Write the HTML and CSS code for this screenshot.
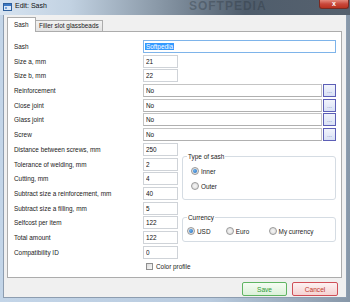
FILE: index.html
```html
<!DOCTYPE html>
<html lang="en">
<head>
  <meta charset="UTF-8">
  <title>Edit: Sash</title>
  <link rel="stylesheet" href="styles.css">
</head>
<body>
  <div class="window">
    <div class="titlebar">
      <svg class="app-icon" width="9" height="8" viewBox="0 0 9 8">
        <rect x="0.5" y="0.5" width="8" height="7" fill="#dbe8f6" stroke="#2d5f9c"/>
        <rect x="1" y="1" width="7" height="2" fill="#3b78c4"/>
        <rect x="2" y="4" width="2" height="2" fill="#7aa6da"/>
      </svg>
      <span class="title">Edit: Sash</span>
      <span class="watermark">SOFTPEDIA</span>
      <div class="close-btn">x</div>
    </div>

    <div class="client">
      <div class="tabs">
        <div class="tab active">Sash</div>
        <div class="tab">Filler slot glassbeads</div>
      </div>

      <div class="panel">
        <div class="form">
          <label>Sash</label>
          <div class="edit wide focused"><span class="sel">Softpedia</span></div>

          <label>Size a, mm</label>
          <input class="short" value="21">

          <label>Size b, mm</label>
          <input class="short" value="22">

          <label>Reinforcement</label>
          <input class="long" value="No">
          <button class="dots">...</button>

          <label>Close joint</label>
          <input class="long" value="No">
          <button class="dots">...</button>

          <label>Glass joint</label>
          <input class="long" value="No">
          <button class="dots">...</button>

          <label>Screw</label>
          <input class="long" value="No">
          <button class="dots">...</button>

          <label>Distance between screws, mm</label>
          <input class="short" value="250">

          <fieldset class="group sash-type">
            <legend>Type of sash</legend>
            <div class="option"><span class="radio checked"></span>Inner</div>
            <div class="option"><span class="radio"></span>Outer</div>
          </fieldset>

          <label>Tolerance of welding, mm</label>
          <input class="short" value="2">

          <label>Cutting, mm</label>
          <input class="short" value="4">

          <label>Subtract size a reinforcement, mm</label>
          <input class="short" value="40">

          <label>Subtract size a filling, mm</label>
          <input class="short" value="5">

          <fieldset class="group currency">
            <legend>Currency</legend>
            <div class="option usd"><span class="radio checked"></span>USD</div>
            <div class="option euro"><span class="radio"></span>Euro</div>
            <div class="option"><span class="radio"></span>My currency</div>
          </fieldset>

          <label>Selfcost per item</label>
          <input class="short" value="122">

          <label>Total amount</label>
          <input class="short" value="122">

          <label>Compatibility ID</label>
          <input class="short" value="0">

          <div class="check-row"><span class="checkbox"></span>Color profile</div>
        </div>
      </div>

      <div class="actions">
        <button class="save">Save</button>
        <button class="cancel">Cancel</button>
      </div>
    </div>
  </div>
</body>
</html>
```

FILE: styles.css
```css
* {
  margin: 0;
  padding: 0;
  box-sizing: border-box;
}

body {
  width: 350px;
  height: 302px;
  overflow: hidden;
  font-family: "Liberation Sans", Arial, sans-serif;
  font-size: 6.4px;
  color: #222;
  background: #bccfe3;
}

.window {
  width: 350px;
  height: 302px;
  display: flex;
  flex-direction: column;
  background: linear-gradient(90deg, #c3d5e8 0%, #b9cbdf 60%, #8797a8 100%);
}

/* title bar */
.titlebar {
  height: 15px;
  display: flex;
  align-items: flex-start;
  background: linear-gradient(90deg, #d6e3f0 0%, #c2d2e2 20%, #8a99a8 45%, #4f5d6c 70%, #56616e 100%);
}

.app-icon {
  margin: 3px 0 0 3px;
}

.title {
  margin: 2px 0 0 3px;
  font-size: 7px;
  color: #111;
}

.watermark {
  margin: 0 0 0 142px;
  font-size: 12px;
  font-weight: bold;
  letter-spacing: 1px;
  color: rgba(40, 50, 60, 0.35);
  line-height: 13px;
}

.close-btn {
  margin-left: auto;
  margin-right: 1px;
  width: 30px;
  height: 9px;
  border: 1px solid #7a2a22;
  border-top: none;
  border-radius: 0 0 3px 3px;
  background: linear-gradient(180deg, #e48a7c 0%, #c9473a 50%, #b8321f 100%);
  color: #fff;
  font-size: 7px;
  font-weight: bold;
  line-height: 7px;
  text-align: center;
}

/* client area */
.client {
  flex: 1;
  margin: 0 3px 4px 3px;
  border: 1px solid #8d9db0;
  border-top: none;
  background: #f0f0f0;
  padding: 2px 4px 0 3px;
  display: flex;
  flex-direction: column;
}

.tabs {
  display: flex;
  align-items: flex-end;
  height: 14px;
}

.tab {
  height: 11px;
  padding: 0 3px;
  border: 1px solid #acacac;
  border-bottom: none;
  background: linear-gradient(180deg, #f2f2f2 0%, #e3e3e3 100%);
  line-height: 10px;
  margin-left: -1px;
}

.tab.active {
  height: 15px;
  width: 29px;
  margin-left: 0;
  margin-bottom: -1px;
  padding: 0 0 0 6px;
  background: #fff;
  line-height: 14px;
  position: relative;
  z-index: 1;
}

.panel {
  height: 247px;
  background: #fff;
  border: 1px solid #acacac;
  padding: 8px 5px 0 6px;
}

.form {
  display: grid;
  grid-template-columns: 129px 35px 4px 140px 1px 13px;
  grid-auto-rows: 13px;
  row-gap: 1.7px;
}

.form label {
  grid-column: 1;
  line-height: 13px;
}

input,
.edit {
  height: 13px;
  border: 1px solid #cfd3d8;
  background: #fff;
  font: inherit;
  color: #111;
  padding: 0 2px;
  outline: none;
}

.edit {
  line-height: 11px;
}

.short {
  grid-column: 2;
}

.long {
  grid-column: 2 / span 3;
  border-color: #c4c4c4;
  border-bottom-color: #b0b0b0;
}

.wide {
  grid-column: 2 / span 5;
}

.focused {
  border-color: #7eb4ea;
  padding-left: 1px;
}

.sel {
  background: #3399ff;
  color: #fff;
  padding: 0 1px;
}

.dots {
  grid-column: 6;
  width: 13px;
  height: 13px;
  border: 1px solid #5c5fb6;
  background: linear-gradient(180deg, #f1f4fc 0%, #d9e1f5 100%);
  color: #5d6bb3;
  font: inherit;
  font-size: 6px;
  line-height: 13px;
}

/* group boxes */
.group {
  grid-column: 4 / span 3;
  border: 1px solid #d5dce3;
  border-radius: 3px;
  padding: 0 0 0 4px;
  margin-top: -5px;
  min-width: 0;
}

.group legend {
  padding: 0 1px;
  line-height: 7.4px;
}

.sash-type {
  grid-row: 9 / span 3;
  padding-top: 7px;
  display: flex;
  flex-direction: column;
  gap: 6px;
}

.sash-type .option {
  margin-left: 4px;
}

.currency {
  grid-row: 13 / span 2;
  margin-top: -2px;
  margin-bottom: 2px;
  padding-top: 5px;
}

.currency .option {
  display: inline-flex;
  vertical-align: top;
}

.currency .usd {
  width: 37px;
}

.currency .euro {
  width: 41px;
}

.option {
  display: flex;
  align-items: center;
  height: 9px;
  gap: 2px;
}

.radio {
  width: 8px;
  height: 8px;
  border-radius: 50%;
  border: 1px solid #9a9a9a;
  background: radial-gradient(circle, #f6f6f6 0%, #d8d8d8 100%);
  display: flex;
  align-items: center;
  justify-content: center;
}

.radio.checked::after {
  content: '';
  width: 4px;
  height: 4px;
  border-radius: 50%;
  background: radial-gradient(circle at 40% 40%, #6fb3ef 0%, #1c64b4 100%);
}

.check-row {
  grid-column: 2 / span 5;
  display: flex;
  align-items: center;
  gap: 3px;
  padding-left: 3px;
}

.checkbox {
  width: 7px;
  height: 7px;
  border: 1px solid #8f8f8f;
  background: linear-gradient(135deg, #dcdcdc 0%, #f8f8f8 100%);
}

/* dialog buttons */
.actions {
  display: flex;
  justify-content: flex-end;
  gap: 5px;
  margin-top: 4px;
  padding-right: 4px;
}

.actions button {
  height: 14px;
  font: inherit;
  font-size: 6.6px;
  border-radius: 2px;
}

.save {
  width: 45px;
  border: 1px solid #5fb462;
  background: linear-gradient(180deg, #f5fcf3 0%, #dcf1d9 100%);
  color: #2f9a36;
}

.cancel {
  width: 46px;
  border: 1px solid #cf4f57;
  background: linear-gradient(180deg, #fdf1f1 0%, #f5d2d2 100%);
  color: #c0392b;
}
```
